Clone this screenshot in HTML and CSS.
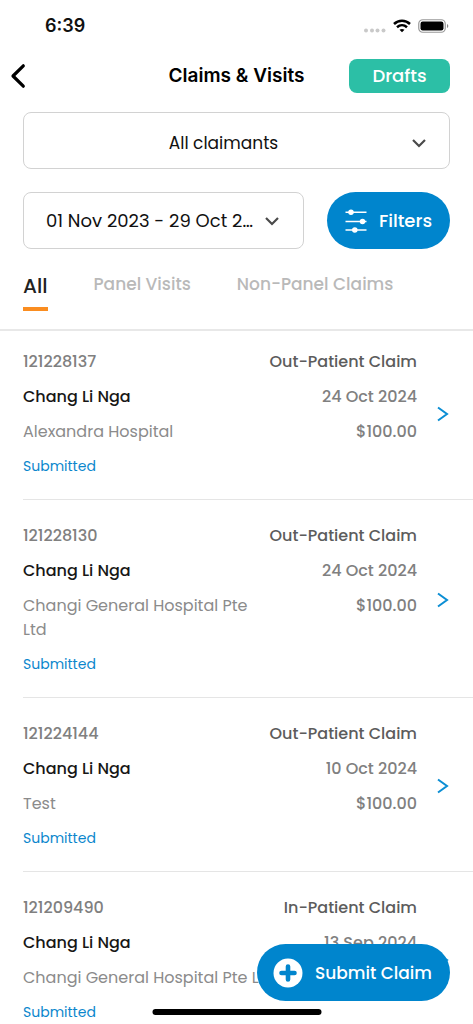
FILE: index.html
```html
<!DOCTYPE html>
<html lang="en">
<head>
<meta charset="utf-8">
<meta name="viewport" content="width=device-width, initial-scale=1">
<title>Claims &amp; Visits</title>
<link rel="stylesheet" href="styles.css">
</head>
<body>
<div class="app">
  <div class="status-bar">
    <time class="clock">6:39</time>
    <div class="indicators">
      <svg class="signal" width="22" height="18" viewBox="0 0 22 18" fill="#c9c9c9" aria-hidden="true"><circle cx="2" cy="13.5" r="2"/><circle cx="8" cy="13.5" r="2"/><circle cx="13.500" cy="13.500" r="2"/><circle cx="19.500" cy="13.500" r="2"/></svg>
      <svg width="18" height="14" viewBox="0 0 18 14" fill="none" stroke="#000" stroke-width="2.500" aria-hidden="true"><path d="M1 5C5.500.600 12.500.600 17 5"/><path d="M4 8.300c3-2.700 7-2.700 10 0"/><path d="M6.500 10.800q2.500-1.700 5 0L9 13.300z" fill="#000" stroke="none"/></svg>
      <svg width="31" height="14" viewBox="0 0 31 14" aria-hidden="true"><rect x=".75" y=".75" width="26.500" height="12.500" rx="4" fill="none" stroke="#999" stroke-width="1.200"/><rect x="2.500" y="2.500" width="23" height="9" rx="2.200" fill="#000"/><path d="M29 5q1.300.4 1.300 2T29 9z" fill="#888"/></svg>
    </div>
  </div>

  <header class="header">
    <button class="back" type="button" aria-label="Back">
      <svg width="16" height="26" viewBox="0 0 16 26" fill="none" stroke="#000" stroke-width="3.200" stroke-linecap="round" stroke-linejoin="round"><path d="M13.300 2.800 3 13l10.300 10.200"/></svg>
    </button>
    <h1 class="title">Claims &amp; Visits</h1>
    <button class="drafts" type="button">Drafts</button>
  </header>

  <div class="filters">
    <div class="claimant">
      <select class="claimant-select" aria-label="Claimant"><option>All claimants</option></select>
      <svg class="chevron" width="14" height="14" viewBox="0 0 14 14" fill="none" stroke="#4a4a4a" stroke-width="2.200"><path d="m1 4 6 6 6-6"/></svg>
    </div>
    <div class="filter-row">
      <button class="period" type="button">
        <span class="period-text">01 Nov 2023 - 29 Oct 2024</span>
        <svg class="period-chevron" width="14" height="14" viewBox="0 0 14 14" fill="none" stroke="#4a4a4a" stroke-width="2.200"><path d="m1 4 6 6 6-6"/></svg>
      </button>
      <button class="pill" type="button">
        <svg width="22" height="24" viewBox="0 0 22 24" fill="#fff" stroke="#fff" stroke-width="1.500" aria-hidden="true"><path d="M.5 3.300h21M.5 12.500h21M.5 21h21"/><circle cx="6" cy="3.300" r="2"/><circle cx="17.500" cy="12.500" r="2"/><circle cx="9.800" cy="21" r="2"/></svg>
        Filters
      </button>
    </div>
  </div>

  <nav class="tabs">
    <a class="tab tab-active" href="#all" aria-current="page">All</a>
    <a class="tab" href="#panel">Panel Visits</a>
    <a class="tab" href="#non-panel">Non-Panel Claims</a>
  </nav>

  <main class="claims">
    <a class="claim" href="#121228137">
      <div class="details"><span class="number">121228137</span><span class="name">Chang Li Nga</span><span class="place">Alexandra Hospital</span><span class="state">Submitted</span></div>
      <div class="summary"><span class="kind">Out-Patient Claim</span><span>24 Oct 2024</span><span>$100.00</span></div>
      <svg class="arrow" width="12" height="16" viewBox="0 0 12 16"><path d="m1 1.500 9 6.500-9 6.500"/></svg>
    </a>
    <a class="claim" href="#121228130">
      <div class="details"><span class="number">121228130</span><span class="name">Chang Li Nga</span><span class="place">Changi General Hospital Pte Ltd</span><span class="state">Submitted</span></div>
      <div class="summary"><span class="kind">Out-Patient Claim</span><span>24 Oct 2024</span><span>$100.00</span></div>
      <svg class="arrow" width="12" height="16" viewBox="0 0 12 16"><path d="m1 1.500 9 6.500-9 6.500"/></svg>
    </a>
    <a class="claim" href="#121224144">
      <div class="details"><span class="number">121224144</span><span class="name">Chang Li Nga</span><span class="place">Test</span><span class="state">Submitted</span></div>
      <div class="summary"><span class="kind">Out-Patient Claim</span><span>10 Oct 2024</span><span>$100.00</span></div>
      <svg class="arrow" width="12" height="16" viewBox="0 0 12 16"><path d="m1 1.500 9 6.500-9 6.500"/></svg>
    </a>
    <a class="claim" href="#121209490">
      <div class="details"><span class="number">121209490</span><span class="name">Chang Li Nga</span><span class="place">Changi General Hospital Pte Ltd</span><span class="state">Submitted</span></div>
      <div class="summary"><span class="kind">In-Patient Claim</span><span>13 Sep 2024</span></div>
      <svg class="arrow" width="12" height="16" viewBox="0 0 12 16"><path d="m1 1.500 9 6.500-9 6.500"/></svg>
    </a>
  </main>
</div>

<button class="pill submit" type="button">
  <svg width="30" height="30" viewBox="0 0 30 30" aria-hidden="true"><circle cx="15" cy="15" r="14.500" fill="#fff"/><path d="M15 8.500v13M8.500 15h13" stroke="#0085cd" stroke-width="4.600" stroke-linecap="round"/></svg>
  Submit Claim
</button>
<div class="home-indicator"></div>
</body>
</html>
```

FILE: styles.css
```css
* {
  box-sizing: border-box;
}

body {
  margin: 0;
  background: #fff;
  color: #111;
  font-family: Poppins, Inter, "Liberation Sans", sans-serif;
  font-size: 16px;
  line-height: 24px;
}

button,
select {
  font: inherit;
  color: inherit;
  margin: 0;
  padding: 0;
  border: 0;
  background: none;
  cursor: pointer;
}

a {
  color: inherit;
  text-decoration: none;
}

svg {
  display: block;
  flex: none;
}

.app {
  display: flex;
  flex-direction: column;
  height: 100vh;
  overflow: hidden;
}

.status-bar {
  display: flex;
  flex: none;
  align-items: center;
  justify-content: space-between;
  height: 52px;
  padding: 0 24px 0 45px;
}

.clock {
  font-family: Inter, sans-serif;
  font-size: 18px;
  font-weight: 600;
}

.indicators {
  display: flex;
  align-items: center;
  gap: 7px;
}

.header {
  display: grid;
  flex: none;
  grid-template-columns: 101px 1fr 101px;
  align-items: center;
  height: 48px;
  padding: 0 23px 0 10px;
}

.back {
  justify-self: start;
}

.title {
  margin: 0;
  padding-left: 13px;
  font-family: Inter, sans-serif;
  font-size: 19px;
  font-weight: 600;
  text-align: center;
  color: #000;
}

.drafts {
  height: 34px;
  border-radius: 8px;
  background: #2cbfa6;
  color: #fff;
  font-size: 18px;
  font-weight: 500;
}

.filters {
  display: flex;
  flex: none;
  flex-direction: column;
  gap: 23px;
  padding: 12px 23px 0;
}

.claimant {
  display: grid;
  align-items: center;
}

.claimant-select {
  grid-area: 1 / 1;
  width: 100%;
  height: 57px;
  padding: 4px 48px 0 22px;
  border: 1px solid #d2d2d2;
  border-radius: 8px;
  appearance: none;
  font-size: 17px;
  text-align: center;
  text-align-last: center;
}

.chevron {
  grid-area: 1 / 1;
  justify-self: end;
  margin-right: 24px;
  margin-top: 4px;
  pointer-events: none;
}

.filter-row {
  display: grid;
  grid-template-columns: 1fr 123px;
  gap: 23px;
}

.period {
  display: flex;
  align-items: center;
  gap: 8px;
  min-width: 0;
  padding: 0 24px 0 22px;
  border: 1px solid #d2d2d2;
  border-radius: 8px;
  font-size: 18px;
}

.period-text {
  flex: 1;
  overflow: hidden;
  text-align: left;
  text-overflow: ellipsis;
  white-space: nowrap;
}

.pill {
  display: flex;
  align-items: center;
  justify-content: space-between;
  height: 57px;
  padding: 0 18px;
  border-radius: 29px;
  background: #0085cd;
  color: #fff;
  font-size: 18px;
  font-weight: 500;
}

.tabs {
  display: flex;
  flex: none;
  align-items: flex-start;
  gap: 46px;
  height: 82px;
  padding: 23px 23px 0;
  border-bottom: 2px solid #e8e8e8;
  color: #b9b9b9;
  font-size: 17px;
  font-weight: 500;
}

.tab-active {
  padding: 2px 0 9px;
  border-bottom: 4px solid #fa8d20;
  color: #222;
  font-size: 20px;
}

.claims {
  flex: 1;
  min-height: 0;
  margin-top: -5px;
  padding-left: 23px;
  overflow: hidden;
}

.claim {
  display: flex;
  align-items: center;
  border-bottom: 1px solid #e5e5e5;
  padding: 24px 24px 22px 0;
}

.details,
.summary {
  display: flex;
  flex-direction: column;
  align-self: flex-start;
  gap: 11px;
}

.details {
  flex: 1;
  min-width: 0;
}

.summary {
  align-items: flex-end;
  margin-left: 6px;
  color: #808080;
  font-weight: 500;
}

.number {
  color: #808080;
  font-weight: 500;
}

.name {
  color: #171717;
  font-weight: 500;
}

.place {
  color: #8b8b8b;
}

.state {
  color: #0b87cd;
  font-size: 14px;
  line-height: 22px;
}

.kind {
  color: #5c5c5c;
}

.arrow {
  margin-left: 20px;
  fill: none;
  stroke: #0b8ed4;
  stroke-width: 2;
}

.submit {
  position: fixed;
  right: 23px;
  bottom: 23px;
  width: 193px;
  padding: 0 18px 0 16px;
  font-size: 17px;
}

.home-indicator {
  position: fixed;
  bottom: 9px;
  left: 50%;
  width: 169px;
  height: 6px;
  border-radius: 3px;
  background: #000;
  transform: translateX(-50%);
}
```
